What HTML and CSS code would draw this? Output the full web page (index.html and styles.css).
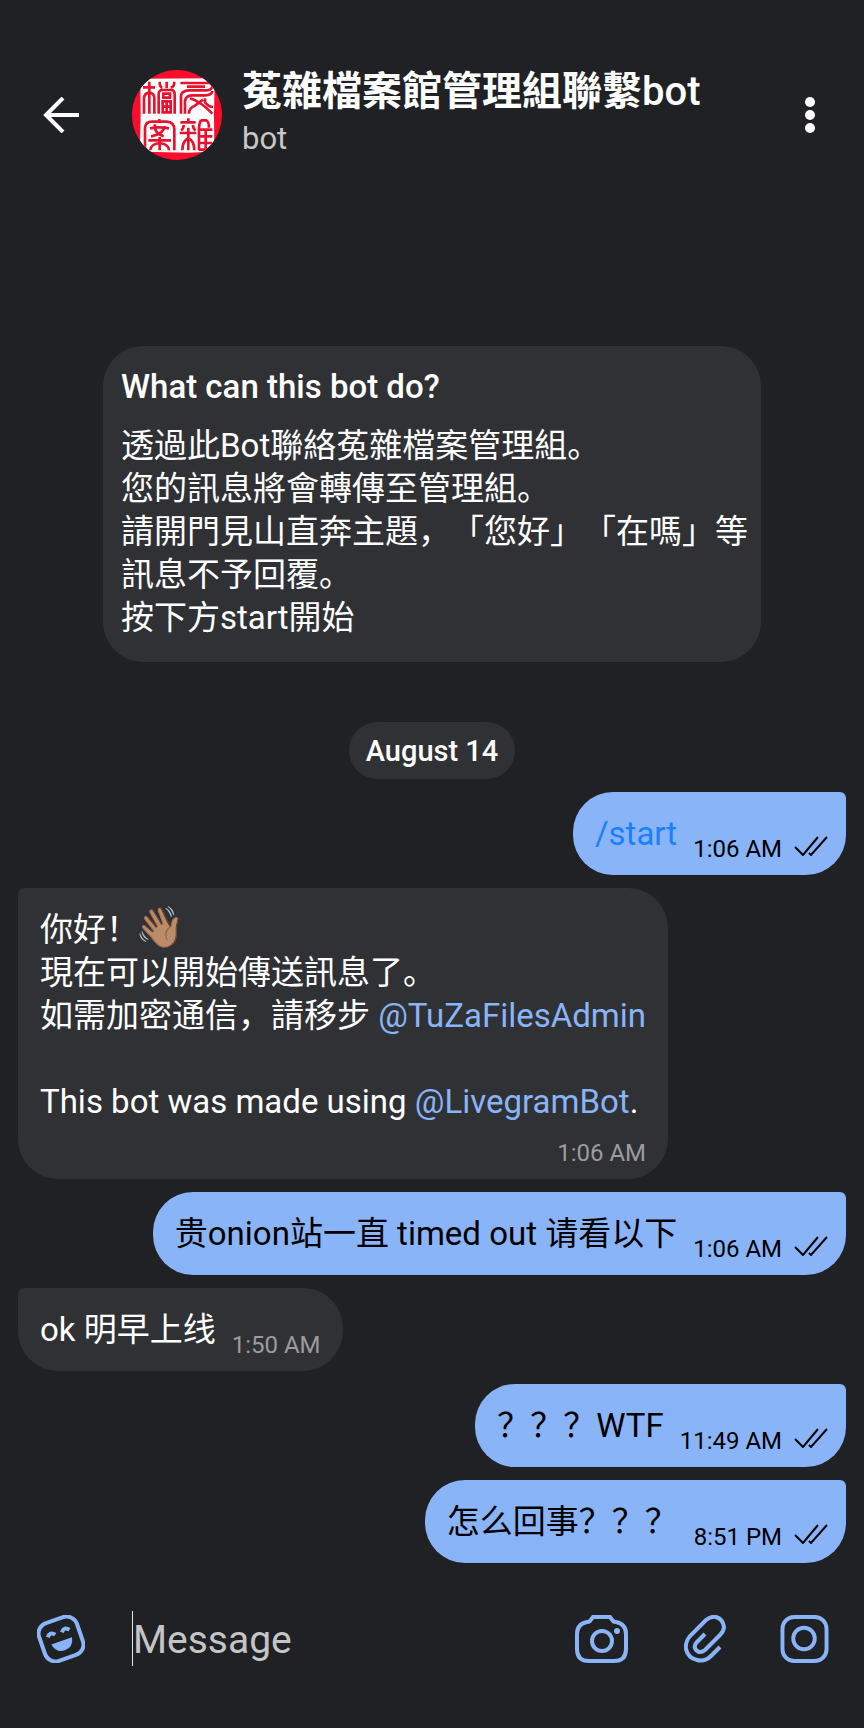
FILE: index.html
```html
<!doctype html>
<html lang="zh-Hans">
<head>
	<title>菟雜檔案館管理組聯繫bot</title>
	<meta charset="utf-8" />
	<meta name="viewport" content="width=device-width, initial-scale=1" />
	<link rel="stylesheet" href="styles.css">
</head>
<body>
	<header class="header">
		<button class="back" aria-label="Back">
			<svg class="icon-back" viewBox="0 0 36 36"><path d="M36 18H3M20 1L3 18l17 17" /></svg>
		</button>
		<svg class="avatar" viewBox="21 27 270 270" role="img" aria-label="Avatar">
			<rect class="ink" x="21" y="27" width="270" height="270" />
			<path class="paper" d="M46 58Q44 52 58 53L255 52Q270 53 269 62L267 160L268 262Q268 274 256 272L190 275L60 272Q42 274 45 250L47 160Z" />
			<path class="seal" d="M73 62V158M54 79H90M57 158V112Q57 98 73 94Q88 98 88 112V158M125 62V82M104 62Q104 78 112 80M148 62Q148 78 137 80M101 158V100Q101 87 112 87H138Q149 87 149 100V158M115 98H135V110H115ZM113 121H137V154H113ZM125 121V154M113 137H137" />
			<path class="seal" d="M166 66H252Q264 67 262 77Q258 88 245 88H190Q168 90 168 106V158M186 77H240M180 158V120Q182 104 200 103H240Q262 102 262 90M195 112Q225 120 262 158M192 158Q192 140 210 134L234 116M240 112V124Q250 138 264 138" />
			<path class="seal" d="M60 268V200Q62 182 80 182H125Q148 184 148 205V268M103 174V182M75 202Q100 196 132 202M90 190Q85 215 116 226M120 195Q115 220 78 226M70 238H138M104 228V268M76 268Q76 250 104 246Q132 250 132 268" />
			<path class="seal" d="M190 172V182M166 184H212M176 192Q176 204 168 208M204 192Q204 204 212 208M164 216H214M190 200V268M172 268Q172 240 190 232Q208 240 208 268M228 176Q222 190 222 200V268M222 206H262M242 206V268M222 226H262M222 246H262M222 266H262M228 178H244Q252 182 252 200" />
		</svg>
		<div class="peer">
			<h1><span class="cjk" lang="zh-Hant">菟雜檔案館管理組聯繫</span>bot</h1>
			<p>bot</p>
		</div>
		<button class="more" aria-label="More options">
			<svg class="icon-more" viewBox="0 0 10 36">
				<circle cx="5" cy="5" r="5" /><circle cx="5" cy="18" r="5" /><circle cx="5" cy="31" r="5" />
			</svg>
		</button>
	</header>

	<main class="chat">
		<section class="about">
			<h2>What can this bot do?</h2>
			<p>透過此Bot聯絡菟雜檔案管理組。<br>您的訊息將會轉傳至管理組。<br>請開門見山直奔主題，「您好」「在嗎」等訊息不予回覆。<br>按下方start開始</p>
		</section>

		<div class="date">August 14</div>

		<div class="message out">
			<p><a class="command" href="#start">/start</a></p>
			<span class="meta"><time>1:06 AM</time><svg class="checks" viewBox="0 0 34 20"><path d="M1 11l8 8L24 1M15 17l2 2L33 1" /></svg></span>
		</div>

		<div class="message in long">
			<p>你好！<span class="emoji">👋🏽</span><br>現在可以開始傳送訊息了。<br>如需加密通信，請移步 <a href="#TuZaFilesAdmin">@TuZaFilesAdmin</a><br><br>This bot was made using <a href="#LivegramBot">@LivegramBot</a>.</p>
			<span class="meta"><time>1:06 AM</time></span>
		</div>

		<div class="message out">
			<p>贵onion站一直 timed out 请看以下</p>
			<span class="meta"><time>1:06 AM</time><svg class="checks" viewBox="0 0 34 20"><path d="M1 11l8 8L24 1M15 17l2 2L33 1" /></svg></span>
		</div>

		<div class="message in">
			<p>ok 明早上线</p>
			<span class="meta"><time>1:50 AM</time></span>
		</div>

		<div class="message out">
			<p>？？？WTF</p>
			<span class="meta"><time>11:49 AM</time><svg class="checks" viewBox="0 0 34 20"><path d="M1 11l8 8L24 1M15 17l2 2L33 1" /></svg></span>
		</div>

		<div class="message out">
			<p>怎么回事？？？</p>
			<span class="meta"><time>8:51 PM</time><svg class="checks" viewBox="0 0 34 20"><path d="M1 11l8 8L24 1M15 17l2 2L33 1" /></svg></span>
		</div>
	</main>

	<form class="composer">
		<button type="button" aria-label="Stickers">
			<svg class="icon-sticker" viewBox="0 0 48 48">
				<g transform="rotate(-19 24 24)">
					<rect x="4" y="4" width="40" height="40" rx="11" />
					<path d="M12 18q4-5 8 0M27 18q4-5 8 0" />
					<path class="solid" d="M13 26H35Q33 36 24 36T13 26Z" />
				</g>
			</svg>
		</button>
		<input type="text" placeholder="Message" aria-label="Message">
		<button type="button" aria-label="Camera">
			<svg class="icon-camera" viewBox="0 0 53 48">
				<path d="M18 2H35L38 6Q39 7 41 7Q51 9 51 19V34Q51 46 39 46H14Q2 46 2 34V19Q2 9 12 7Q14 7 15 6Z" />
				<circle cx="27" cy="26" r="10" />
				<circle class="solid" cx="42" cy="16" r="3" />
			</svg>
		</button>
		<button type="button" aria-label="Attach">
			<svg class="icon-clip" viewBox="0 0 42 48">
				<path d="M36 32L27 41Q21 47 13 45Q4 43 2 34Q1 27 6 21L22 5Q27 1 32 2Q39 4 40 12Q40 16 36 20L21 35Q16 39 12 35Q9 31 13 27L21 19" />
			</svg>
		</button>
		<button type="button" aria-label="Record video">
			<svg class="icon-record" viewBox="0 0 49 49">
				<rect x="2" y="2" width="45" height="45" rx="12" />
				<circle cx="24" cy="24" r="11" />
			</svg>
		</button>
	</form>
</body>
</html>
```
FILE: styles.css
```css
* {
	box-sizing: border-box;
}

body {
	margin: 0;
	min-height: 100vh;
	display: flex;
	flex-direction: column;
	background-color: #202124;
	color: #fff;
	font-family: Roboto, "Noto Sans CJK SC", sans-serif;
	font-size: 33px;
	line-height: 43px;
	text-spacing-trim: space-all;
}

h1, h2, p {
	margin: 0;
	font-weight: normal;
}

button {
	display: flex;
	padding: 0;
	border: 0;
	background: none;
	color: inherit;
	cursor: pointer;
}

svg {
	display: block;
	fill: none;
	stroke: currentColor;
}

a {
	color: #8ab4f8;
	text-decoration: none;
}

/* header */

.header {
	display: flex;
	align-items: center;
	padding: 62px 49px 62px 43px;
}

.icon-back {
	width: 36px;
	height: 36px;
	stroke-width: 4;
}

.avatar {
	width: 90px;
	height: 90px;
	margin: 0 20px 0 53px;
	flex: none;
	border-radius: 50%;
}

.ink {
	fill: #fb0d2b;
	stroke: none;
}

.paper {
	fill: #fff;
	stroke: none;
}

.seal {
	stroke: #e8122f;
	stroke-width: 8;
}

.peer {
	flex: 1;
	min-width: 0;
	padding-bottom: 8px;
}

.peer h1 {
	font-size: 40px;
	font-weight: 500;
	line-height: 52px;
}

.peer .cjk {
	font-family: "Noto Sans CJK TC", sans-serif;
	font-weight: 700;
}

.peer p {
	font-size: 31px;
	line-height: 42px;
	color: #c7c7c7;
}

.icon-more {
	width: 10px;
	height: 36px;
	fill: currentColor;
	stroke: none;
}

/* messages */

.chat {
	flex: 1;
	display: flex;
	flex-direction: column;
	justify-content: flex-end;
	align-items: flex-start;
	gap: 13px;
	padding: 0 18px 13px;
}

.about {
	align-self: center;
	max-width: 658px;
	margin-bottom: 47px;
	padding: 19px 13px 23px 18px;
	border-radius: 40px;
	background-color: #303134;
}

.about h2 {
	margin-bottom: 16px;
	font-size: 33px;
	font-weight: 500;
}

.date {
	align-self: center;
	padding: 8px 17px 6px;
	border-radius: 29px;
	background-color: #303134;
	font-size: 29px;
	font-weight: 500;
}

.message {
	display: flex;
	align-items: flex-end;
	gap: 16px;
	padding: 20px 22px;
	border-radius: 40px;
}

.in {
	border-top-left-radius: 6px;
	background-color: #303134;
}

.out {
	align-self: flex-end;
	padding-right: 18px;
	border-top-right-radius: 6px;
	background-color: #8ab4f8;
	color: #000;
}

.long {
	flex-direction: column;
	gap: 13px;
}

.emoji {
	margin-left: -4px;
	font-size: 40px;
	line-height: 1;
}

.command {
	color: #1a80ff;
}

.meta {
	display: flex;
	align-items: center;
	gap: 12px;
	margin-bottom: -12px;
	font-size: 24px;
	line-height: 35px;
}

.in .meta {
	color: #9b9c9e;
}

.checks {
	width: 34px;
	height: 20px;
	margin-bottom: 8px;
	stroke-width: 2;
}

/* composer */

.composer {
	display: flex;
	align-items: center;
	padding: 35px 35px 62px 37px;
	color: #8ab4f8;
}

.composer svg {
	height: 48px;
	stroke-width: 4;
}

.composer .solid {
	fill: currentColor;
	stroke: none;
}

.composer input {
	flex: 1;
	min-width: 0;
	height: 55px;
	margin-left: 47px;
	padding: 3px 0 0;
	border: 0;
	border-left: 1px solid #e8e6df;
	outline: none;
	background: none;
	color: #fff;
	font: 39px Roboto, "Noto Sans CJK SC", sans-serif;
}

.composer input::placeholder {
	color: #c5c5c5;
	opacity: 1;
}

.icon-sticker {
	width: 48px;
}

.icon-camera {
	width: 53px;
}

.icon-clip {
	width: 42px;
	margin: 0 54px 0 56px;
}

.icon-record {
	width: 49px;
}
```
